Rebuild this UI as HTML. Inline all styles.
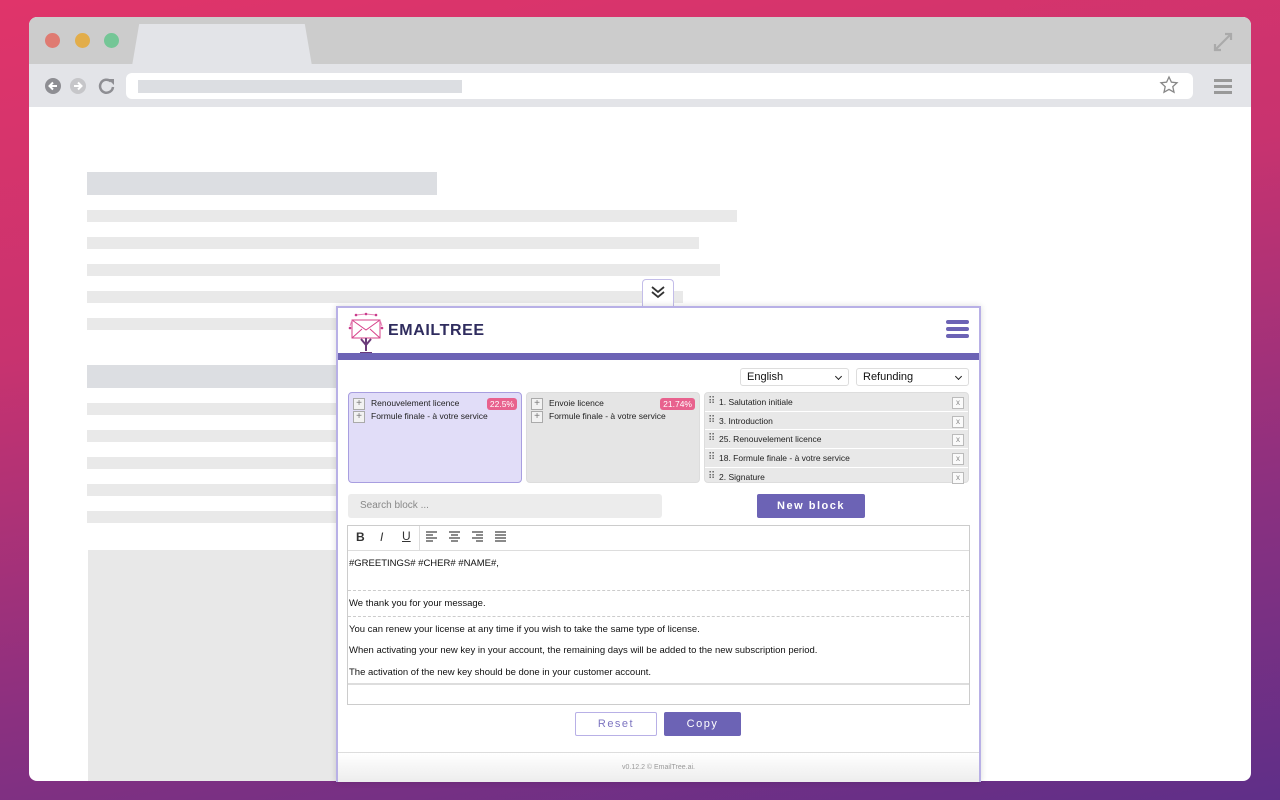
<!DOCTYPE html>
<html><head><meta charset="utf-8"><style>
*{box-sizing:border-box;margin:0;padding:0}
body{width:1280px;height:800px;overflow:hidden;background:linear-gradient(170deg,#e0346a 0%,#c8336f 35%,#8b3080 70%,#5f2f88 100%);font-family:"Liberation Sans",sans-serif;position:relative}
.abs{position:absolute}
.win{left:29px;top:17px;width:1222px;height:764px;background:#fff;border-radius:8px;overflow:hidden}
.tabbar{left:0;top:0;width:1222px;height:47px;background:#cccccc}
.dot{width:15px;height:15px;border-radius:50%;top:16px}
.tool{left:0;top:47px;width:1222px;height:43px;background:#e3e4e8}
.url{left:97px;top:56px;width:1067px;height:26px;background:#fff;border-radius:6px}
.bar{background:#e9e9e9;height:12px;left:87px}
.hd{background:#dcdee2;height:23px;left:87px}
.panel{left:336px;top:306px;width:645px;height:476px;background:#fff;border:2px solid #b8b0e6;border-bottom:none;box-shadow:0 0 6px rgba(0,0,0,.15)}
.sel{height:18px;border:1px solid #ddd;border-radius:3px;font-size:11px;padding:2px 6px;background:#fff;color:#111}
.sel:after{content:"";position:absolute;right:7px;top:5px;width:4px;height:4px;border-right:1.5px solid #222;border-bottom:1.5px solid #222;transform:rotate(45deg)}
.card{top:392px;height:91px;border-radius:4px;font-size:8.5px;color:#222}
.it{position:relative;height:13px;line-height:13px;padding-left:18px;margin-left:4px}
.it:before{content:"+";position:absolute;left:0;top:1px;width:10px;height:10px;border:1px solid #aaa;font-size:10px;line-height:9px;text-align:center;color:#777;background:#f2f2f2}
.pct{position:absolute;top:5px;right:4px;background:#e8628e;color:#fff;font-size:8.5px;padding:1px 3px;border-radius:3px}
.row{height:18.7px;line-height:18px;border-bottom:1px solid #fff;font-size:8.5px;padding-left:14px;position:relative}
.row:before{content:"⠿";position:absolute;left:3px;top:0;color:#666;font-size:10px}
.row:after{content:"x";position:absolute;right:4px;top:4px;width:10px;height:10px;border:1px solid #bbb;font-size:8px;line-height:9px;text-align:center;color:#888;background:#fafafa}
.btn{background:#6c63b5;color:#fff;font-size:11px;letter-spacing:1.5px;text-align:center;border-radius:2px}
.ed{left:347px;top:525px;width:623px;height:180px;border:1px solid #ccc}
.tx{font-size:9.5px;color:#111;left:349px;font-family:"Liberation Sans",sans-serif}
</style></head><body>
<div class="abs win">
 <div class="abs tabbar"></div>
 <div class="abs dot" style="left:16px;background:#df7b72"></div>
 <div class="abs dot" style="left:46px;background:#e2ad4a"></div>
 <div class="abs dot" style="left:75px;background:#74c696"></div>
 <div class="abs" style="left:103px;top:7px;width:180px;height:42px;background:#e3e4e8;border-radius:6px 6px 0 0;clip-path:polygon(4% 0,96% 0,100% 100%,0 100%)"></div>
 <div class="abs tool"></div>
 <div class="abs url"></div>
 <div class="abs" style="left:109px;top:63px;width:324px;height:13px;background:#dcdee2"></div>
 <svg class="abs" style="left:14px;top:59px" width="80" height="20"><circle cx="10" cy="10" r="8" fill="#8e8e93"/><path d="M14 10H7M10 6.5 6.5 10 10 13.5" stroke="#fff" stroke-width="2" fill="none"/><circle cx="35" cy="10" r="8" fill="#c6c6c9"/><path d="M31 10h7M35 6.5 38.5 10 35 13.5" stroke="#fff" stroke-width="2" fill="none"/><path d="M68 5.5A6.5 6.5 0 1 0 70 11" stroke="#8e8e93" stroke-width="2.5" fill="none"/><path d="M65 3h6v6z" fill="#8e8e93"/></svg>
 <svg class="abs" style="left:1130px;top:58px" width="20" height="20"><path d="M10 2l2.4 5.2 5.6.6-4.2 3.8 1.2 5.6L10 14.4 5 17.2l1.2-5.6L2 7.8l5.6-.6z" fill="none" stroke="#888" stroke-width="1.3"/></svg>
 <div class="abs" style="left:1185px;top:62px;width:18px;height:3px;background:#999;box-shadow:0 6px 0 #999,0 12px 0 #999"></div>
 <svg class="abs" style="left:1184px;top:15px" width="20" height="20"><path d="M2 18 18 2M12 2h6v6M8 18H2v-6" stroke="#aaa" stroke-width="2.2" fill="none"/></svg>
 <div class="abs" style="left:59px;top:533px;width:250px;height:240px;background:#e8e8e8"></div>
</div>
<div class="abs hd" style="top:172px;width:350px"></div>
<div class="abs bar" style="top:210px;width:650px"></div>
<div class="abs bar" style="top:237px;width:612px"></div>
<div class="abs bar" style="top:264px;width:633px"></div>
<div class="abs bar" style="top:291px;width:596px"></div>
<div class="abs bar" style="top:318px;width:400px"></div>
<div class="abs hd" style="top:365px;width:300px"></div>
<div class="abs bar" style="top:403px;width:400px"></div>
<div class="abs bar" style="top:430px;width:400px"></div>
<div class="abs bar" style="top:457px;width:400px"></div>
<div class="abs bar" style="top:484px;width:400px"></div>
<div class="abs bar" style="top:511px;width:400px"></div>
<div class="abs" style="left:642px;top:279px;width:32px;height:29px;background:#fff;border:1px solid #c3bde9;border-bottom:none;border-radius:4px 4px 0 0"></div>
<svg class="abs" style="left:650px;top:284px" width="16" height="16"><path d="M2 3l6 5 6-5M2 8l6 5 6-5" stroke="#333" stroke-width="1.8" fill="none"/></svg>
<div class="abs panel"></div>
<svg class="abs" style="left:348px;top:312px" width="36" height="42"><g stroke="#d7418a" stroke-width="1" fill="none"><path d="M4 8h28v18H4z"/><path d="M4 8l14 10 14-10M4 26l10-9M32 26l-10-9"/><path d="M8 3l10 -1 10 1M2 14l2-6M34 14l-2-6" stroke="#e586b8"/></g><g fill="#c93a8c"><circle cx="8" cy="3" r="1.3"/><circle cx="18" cy="2" r="1.3"/><circle cx="28" cy="3" r="1.3"/><circle cx="2" cy="16" r="1.3"/><circle cx="34" cy="16" r="1.3"/></g><path d="M18 26v13M18 33l-5-6M18 33l5-6M12 41h12" stroke="#6a3a7a" stroke-width="2" fill="none"/></svg>
<div class="abs" style="left:388px;top:322px;font-size:16px;font-weight:bold;color:#2f2c5e;letter-spacing:.6px">EMAILTREE</div>
<div class="abs" style="left:946px;top:320px;width:23px;height:4px;background:#6c63b5;border-radius:2px;box-shadow:0 7px 0 #6c63b5,0 14px 0 #6c63b5"></div>
<div class="abs" style="left:338px;top:353px;width:641px;height:7px;background:#6c63b5"></div>
<div class="abs sel" style="left:740px;top:368px;width:109px">English</div>
<div class="abs sel" style="left:856px;top:368px;width:113px">Refunding</div>
<div class="abs card" style="left:348px;width:174px;background:#e1ddf8;border:1px solid #a89ee0;padding-top:4px"><div class="it">Renouvelement licence</div><div class="it">Formule finale - à votre service</div><span class="pct">22.5%</span></div>
<div class="abs card" style="left:526px;width:174px;background:#e5e5e5;border:1px solid #ddd;padding-top:4px"><div class="it">Envoie licence</div><div class="it">Formule finale - à votre service</div><span class="pct">21.74%</span></div>
<div class="abs card" style="left:704px;width:265px;background:#e8e8e8;border:1px solid #ddd"><div class="row">1. Salutation initiale</div><div class="row">3. Introduction</div><div class="row">25. Renouvelement licence</div><div class="row">18. Formule finale - à votre service</div><div class="row" style="border:none">2. Signature</div></div>
<div class="abs" style="left:348px;top:494px;width:314px;height:24px;background:#ececec;border-radius:3px;font-size:10px;color:#888;padding:6px 12px">Search block ...</div>
<div class="abs btn" style="left:757px;top:494px;width:108px;height:24px;line-height:24px;font-weight:bold">New block</div>
<div class="abs ed"></div>
<div class="abs" style="left:348px;top:550px;width:621px;height:1px;background:#ddd"></div>
<div class="abs" style="left:419px;top:526px;width:1px;height:24px;background:#ddd"></div>
<div class="abs" style="left:356px;top:530px;font-size:12px;color:#333;font-weight:bold">B</div>
<div class="abs" style="left:380px;top:530px;font-size:12px;color:#333;font-style:italic">I</div>
<div class="abs" style="left:402px;top:529px;font-size:12px;color:#333;text-decoration:underline">U</div>
<svg class="abs" style="left:426px;top:531px" width="84" height="12"><g stroke="#444" stroke-width="1.2"><path d="M0 1h11M0 4h7M0 7h11M0 10h7"/><path d="M23 1h11M25 4h7M23 7h11M25 10h7"/><path d="M46 1h11M50 4h7M46 7h11M50 10h7"/><path d="M69 1h11M69 4h11M69 7h11M69 10h11"/></g></svg>
<div class="abs tx" style="top:558px">#GREETINGS# #CHER# #NAME#,</div>
<div class="abs" style="left:348px;top:590px;width:621px;border-top:1px dashed #ccc"></div>
<div class="abs tx" style="top:598px">We thank you for your message.</div>
<div class="abs" style="left:348px;top:616px;width:621px;border-top:1px dashed #ccc"></div>
<div class="abs tx" style="top:624px">You can renew your license at any time if you wish to take the same type of license.</div>
<div class="abs tx" style="top:645px">When activating your new key in your account, the remaining days will be added to the new subscription period.</div>
<div class="abs tx" style="top:667px">The activation of the new key should be done in your customer account.</div>
<div class="abs" style="left:348px;top:683px;width:621px;height:2px;background:#ddd"></div>
<div class="abs" style="left:575px;top:712px;width:82px;height:24px;border:1px solid #b8b0e6;border-radius:2px;color:#7c74c0;font-size:11px;letter-spacing:1.5px;text-align:center;line-height:22px">Reset</div>
<div class="abs btn" style="left:664px;top:712px;width:77px;height:24px;line-height:24px">Copy</div>
<div class="abs" style="left:338px;top:752px;width:641px;height:30px;background:linear-gradient(#fff,#ededed);border-top:1px solid #ddd;font-size:7px;color:#999;text-align:center;line-height:30px">v0.12.2 © EmailTree.ai.</div>
</body></html>
